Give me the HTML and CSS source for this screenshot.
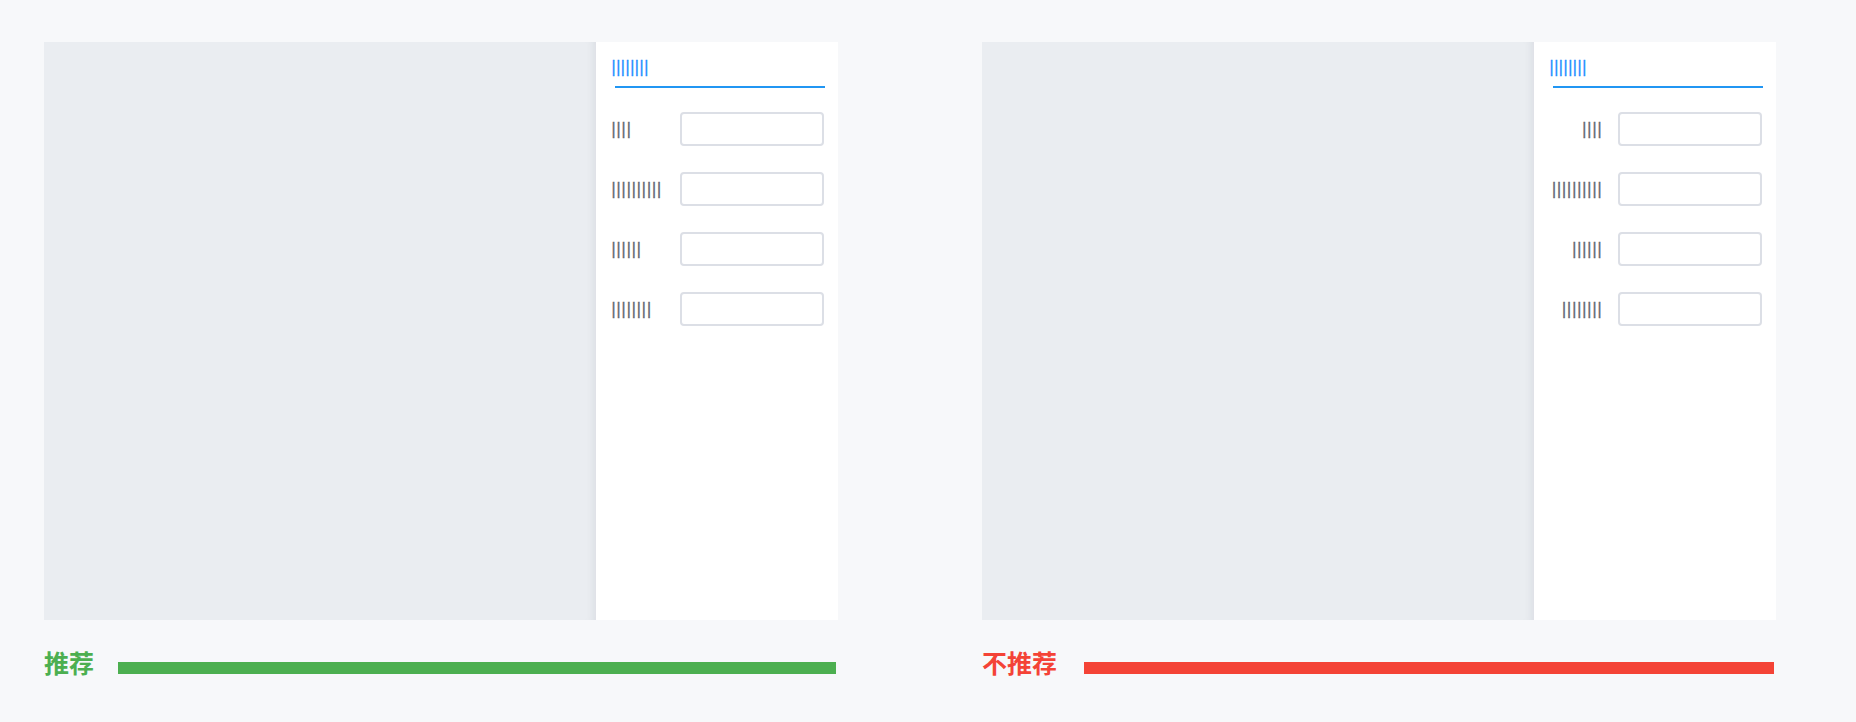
FILE: index.html
```html
<!DOCTYPE html>
<html lang="zh-CN">
<head>
<meta charset="utf-8">
<title>推荐 / 不推荐</title>
<link rel="stylesheet" href="styles.css">
</head>
<body>
<div class="page">
  <section class="example">
    <div class="card">
      <div class="canvas"></div>
      <aside class="panel">
        <div class="tabs"><span class="tab">||||||||</span></div>
        <div class="form">
          <div class="row"><span class="label">||||</span><span class="input"></span></div>
          <div class="row"><span class="label">||||||||||</span><span class="input"></span></div>
          <div class="row"><span class="label">||||||</span><span class="input"></span></div>
          <div class="row"><span class="label">||||||||</span><span class="input"></span></div>
        </div>
      </aside>
    </div>
    <div class="caption good">
      <span class="caption-text">推荐</span>
      <span class="caption-bar"></span>
    </div>
  </section>

  <section class="example">
    <div class="card">
      <div class="canvas"></div>
      <aside class="panel">
        <div class="tabs"><span class="tab">||||||||</span></div>
        <div class="form form-right">
          <div class="row"><span class="label">||||</span><span class="input"></span></div>
          <div class="row"><span class="label">||||||||||</span><span class="input"></span></div>
          <div class="row"><span class="label">||||||</span><span class="input"></span></div>
          <div class="row"><span class="label">||||||||</span><span class="input"></span></div>
        </div>
      </aside>
    </div>
    <div class="caption bad">
      <span class="caption-text">不推荐</span>
      <span class="caption-bar"></span>
    </div>
  </section>
</div>
</body>
</html>
```

FILE: styles.css
```css
html, body {
  margin: 0;
  padding: 0;
  background: #f7f8fa;
}

body {
  width: 1856px;
  height: 722px;
  overflow: hidden;
  font-family: "DejaVu Sans", "Noto Sans CJK SC", sans-serif;
}

.page {
  display: flex;
  gap: 144px;
  padding: 42px 0 0 44px;
}

.example {
  width: 794px;
  display: flex;
  flex-direction: column;
}

.card {
  display: flex;
  height: 578px;
}

.canvas {
  flex: 1;
  background: #eaedf1;
  box-shadow: inset -9px 0 8px -7px rgba(30, 40, 60, 0.08);
}

.panel {
  width: 242px;
  box-sizing: border-box;
  background: #ffffff;
  padding: 18px 14px 0 15px;
}

.tabs {
  margin: 0 -1px 0 4px;
  padding-bottom: 11px;
  border-bottom: 2px solid #2196f3;
}

.tab {
  display: block;
  margin-left: -4px;
  font-size: 15px;
  line-height: 15px;
  height: 15px;
  letter-spacing: -0.38px;
  color: #1a8cff;
  -webkit-text-stroke: 0.3px #1a8cff;
}

.form {
  margin-top: 24px;
  display: flex;
  flex-direction: column;
  gap: 26px;
}

.row {
  display: flex;
  align-items: center;
  gap: 16px;
}

.label {
  width: 53px;
  font-size: 15px;
  line-height: 15px;
  color: #5f6670;
  -webkit-text-stroke: 0.35px #5f6670;
  white-space: nowrap;
}

.form-right .label {
  text-align: right;
}

.input {
  display: block;
  width: 144px;
  height: 34px;
  box-sizing: border-box;
  border: 2px solid #dcdfe6;
  border-radius: 4px;
  background: #fff;
}

.caption {
  display: flex;
  align-items: center;
  margin-top: 30px;
}

.caption-text {
  font-family: "Noto Sans CJK SC", sans-serif;
  font-size: 25px;
  line-height: 25px;
  font-weight: 700;
}

.caption-bar {
  flex: 1;
  height: 12px;
  margin: 11px 2px 0 24px;
}

.good .caption-text { color: #4caf50; }
.good .caption-bar { background: #4caf50; }
.bad .caption-text { color: #f44336; }
.bad .caption-bar { background: #f44336; margin-left: 27px; }
```
